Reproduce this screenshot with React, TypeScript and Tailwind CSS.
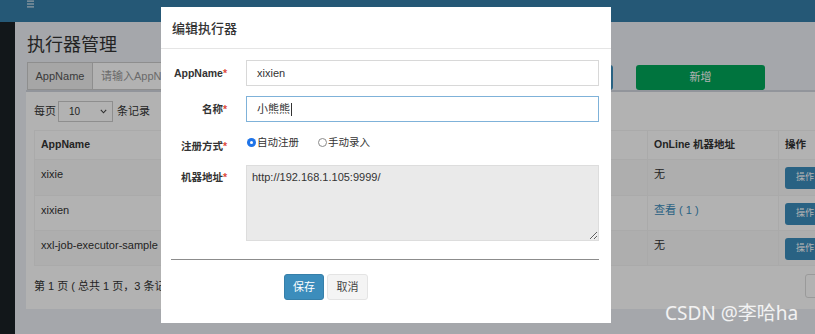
const rows = [
  { app: 'xixie', online: '无', link: false },
  { app: 'xixien', online: '查看 ( 1 )', link: true },
  { app: 'xxl-job-executor-sample', online: '无', link: false },
]

function Hamburger() {
  return (
    <svg width="7" height="8" viewBox="0 0 7 8">
      <rect x="0" y="0.5" width="7" height="1.2" fill="#d6e4ee" />
      <rect x="0" y="3.4" width="7" height="1.2" fill="#d6e4ee" />
      <rect x="0" y="6.3" width="7" height="1.2" fill="#d6e4ee" />
    </svg>
  )
}

function Radio({ checked, label }: { checked?: boolean; label: string }) {
  return (
    <span className="flex items-center">
      {checked ? (
        <span className="flex h-[9px] w-[9px] items-center justify-center rounded-full bg-[#1f74e8]">
          <span className="h-[3px] w-[3px] rounded-full bg-white" />
        </span>
      ) : (
        <span className="h-[9px] w-[9px] rounded-full border border-[#8a8a8a] bg-white" />
      )}
      <span className="ml-[1px]">{label}</span>
    </span>
  )
}

function Label({ children, className = '' }: { children: React.ReactNode; className?: string }) {
  return (
    <label className={`w-[56px] shrink-0 text-right text-[10.5px] font-bold leading-[14px] text-[#333] ${className}`}>
      {children}
      <span className="text-[#dd4b39]">*</span>
    </label>
  )
}

export default function App() {
  return (
    <div className="relative h-[334px] w-[815px] overflow-hidden bg-[#ecf0f5] font-['Liberation_Sans','Noto_Sans_CJK_SC',sans-serif] text-[11px] text-[#333]">
      {/* Top navbar */}
      <header className="flex h-[22px] items-start bg-[#367fa9] pl-[27px]">
        <Hamburger />
      </header>

      <div className="flex h-[312px]">
        <aside className="w-[15px] shrink-0 bg-[#1a2226]" />

        <main className="min-w-0 flex-1 pl-[11px]">
          <h1 className="ml-[1px] mt-[9px] font-['Noto_Sans_CJK_SC',sans-serif] text-[18px] leading-[24px] text-[#333]">
            执行器管理
          </h1>

          {/* Search row */}
          <div className="ml-[1px] mt-[7px] flex h-[28px] items-start">
            <div className="flex h-[28px] w-[480px]">
              <span className="flex w-[66px] items-center justify-center border border-[#ccc] bg-[#eee] text-[11px] text-[#555]">
                AppName
              </span>
              <span className="flex flex-1 items-center border border-l-0 border-[#ccc] bg-white px-[8px] text-[#999]">
                请输入AppName
              </span>
            </div>
            <button className="ml-[26px] mt-[3px] h-[25px] w-[80px] rounded-[3px] bg-[#3c8dbc] text-white">搜索</button>
            <button className="ml-[23px] mt-[3px] h-[25px] w-[129px] rounded-[3px] bg-[#00a65a] text-[11px] text-white">
              新增
            </button>
          </div>

          {/* Box */}
          <section className="w-[880px] shrink-0 border-t-[2px] border-[#d2d6de] bg-white px-[8px] pb-[11px] pt-[9px]">
            <div className="flex h-[21px] items-center">
              <span>每页</span>
              <span className="ml-[2px] flex h-[21px] w-[55px] items-center justify-between border border-[#ccc] pl-[10px] pr-[5px] text-[10px]">
                10
                <svg width="7" height="5" viewBox="0 0 7 5">
                  <path d="M0.8 0.8 L3.5 3.8 L6.2 0.8" fill="none" stroke="#444" strokeWidth="1.1" />
                </svg>
              </span>
              <span className="ml-[4px]">条记录</span>
            </div>

            <div className="mt-[8px] border border-[#f4f4f4]">
              <div className="grid h-[28px] grid-cols-[612px_131px_1fr] text-[10.5px] font-bold">
                <div className="flex items-center px-[6px]">AppName</div>
                <div className="flex items-center border-l border-[#f4f4f4] px-[6px]">OnLine 机器地址</div>
                <div className="flex items-center border-l border-[#f4f4f4] px-[6px]">操作</div>
              </div>
              {rows.map((r, i) => (
                <div
                  key={r.app}
                  className={`grid grid-cols-[612px_131px_1fr] border-t border-[#f4f4f4] ${
                    i % 2 === 0 ? 'bg-[#f9f9f9]' : 'bg-white'
                  } ${i === 0 ? 'h-[36px]' : 'h-[35px]'}`}
                >
                  <div className="px-[6px] pt-[7px] leading-[14px]">{r.app}</div>
                  <div
                    className={`border-l border-[#f4f4f4] px-[6px] pt-[7px] leading-[14px] ${
                      r.link ? 'text-[#3c8dbc]' : ''
                    }`}
                  >
                    {r.online}
                  </div>
                  <div className="border-l border-[#f4f4f4] pl-[6px] pt-[7px]">
                    <button className="h-[22px] w-[40px] rounded-[3px] bg-[#3c8dbc] text-[9px] text-white">操作</button>
                  </div>
                </div>
              ))}
            </div>

            <div className="mt-[8px] grid h-[24px] grid-cols-[771px_auto] items-center">
              <span>第 1 页 ( 总共 1 页，3 条记录 )</span>
              <span className="h-[24px] w-[40px] rounded-[3px] border border-[#ddd] bg-white" />
            </div>
          </section>
        </main>
      </div>

      {/* Modal backdrop */}
      <div className="absolute inset-0 bg-black/30" />

      {/* Modal */}
      <div className="absolute left-[161px] top-[7px] h-[316px] w-[450px] bg-white">
        <div className="flex h-[42px] items-center border-b border-[#e5e5e5] px-[11px] font-['Noto_Sans_CJK_SC',sans-serif] text-[13px] font-medium text-[#333]">
          编辑执行器
        </div>

        <div className="px-[10px] pt-[11px]">
          <div className="flex h-[26px] items-center">
            <Label>AppName</Label>
            <div className="ml-[19px] flex h-[26px] w-[353px] items-center border border-[#d8d8d8] px-[10px] text-[11px]">
              xixien
            </div>
          </div>

          <div className="mt-[10px] flex h-[26px] items-center">
            <Label>名称</Label>
            <div className="ml-[19px] flex h-[26px] w-[353px] items-center border border-[#7fb2d9] px-[10px] text-[11px]">
              小熊熊
              <span className="ml-[1px] h-[13px] w-[1px] bg-[#333]" />
            </div>
          </div>

          <div className="mt-[14px] flex items-start">
            <Label className="pt-[3px]">注册方式</Label>
            <div className="ml-[20px] flex items-center gap-[19px] text-[10.5px] leading-[12px]">
              <Radio checked label="自动注册" />
              <Radio label="手动录入" />
            </div>
          </div>

          <div className="mt-[12px] flex items-start">
            <Label className="pt-[5px]">机器地址</Label>
            <textarea
              readOnly
              value="http://192.168.1.105:9999/"
              className="ml-[19px] h-[76px] w-[353px] border border-[#ddd] bg-[#eaeaea] px-[5px] py-[4px] text-[11px] leading-[14px] text-[#333] outline-none"
            />
          </div>

          <div className="mt-[18px] w-[428px] border-t border-[#8c8c8c]" />

          <div className="ml-[113px] mt-[14px] flex gap-[3px]">
            <button className="h-[26px] w-[40px] rounded-[3px] border border-[#367fa9] bg-[#3c8dbc] text-[11px] text-white">
              保存
            </button>
            <button className="h-[26px] w-[41px] rounded-[3px] border border-[#e4e4e4] bg-[#f4f4f4] text-[11px] text-[#444]">
              取消
            </button>
          </div>
        </div>
      </div>

      {/* Watermark */}
      <div className="absolute left-[665px] top-[302px] font-['Noto_Sans','Noto_Sans_CJK_SC',sans-serif] text-[19px] leading-[22px] text-white/85">
        CSDN @李哈ha
      </div>
    </div>
  )
}
